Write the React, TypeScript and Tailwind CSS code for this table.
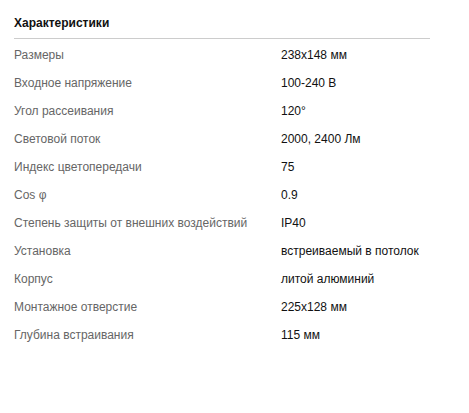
const specs: [string, string][] = [
  ["Размеры", "238x148 мм"],
  ["Входное напряжение", "100-240 В"],
  ["Угол рассеивания", "120°"],
  ["Световой поток", "2000, 2400 Лм"],
  ["Индекс цветопередачи", "75"],
  ["Cos φ", "0.9"],
  ["Степень защиты от внешних воздействий", "IP40"],
  ["Установка", "встреиваемый в потолок"],
  ["Корпус", "литой алюминий"],
  ["Монтажное отверстие", "225x128 мм"],
  ["Глубина встраивания", "115 мм"],
];

export default function App() {
  return (
    <div className="min-h-[413px] w-[469px] bg-white pl-[14px] font-['Liberation_Sans',Arial,sans-serif] text-[12px]">
      <div className="w-[416px]">
        <div className="border-b border-[#cccccc] pt-[15px] pb-[7px]">
          <h2 className="text-[12px] leading-[16px] font-bold text-[#111111]">Характеристики</h2>
        </div>
        <div className="mt-[2px]">
          {specs.map(([label, value]) => (
            <div key={label} className="flex h-[28px] items-center">
              <div className="w-[267px] shrink-0 text-[#666666]">{label}</div>
              <div className="text-[#111111]">{value}</div>
            </div>
          ))}
        </div>
      </div>
    </div>
  );
}
